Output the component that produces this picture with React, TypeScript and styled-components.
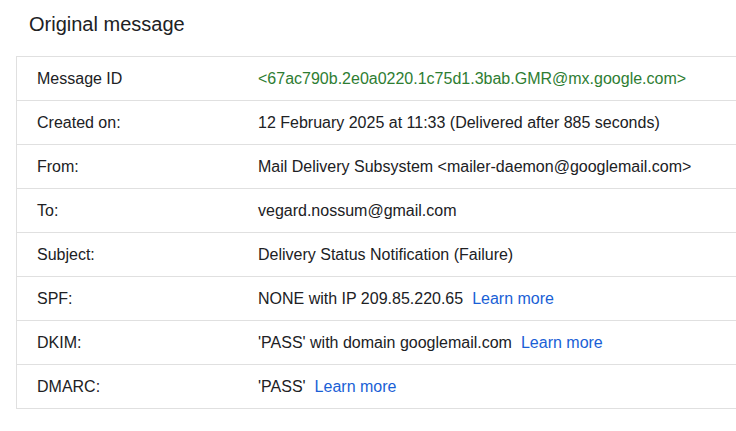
import * as React from 'react';
import styled, { createGlobalStyle } from 'styled-components';

interface HeaderRow {
    label: string;
    value: string;
    tone?: 'id';
    learnMore?: boolean;
}

const rows: HeaderRow[] = [
    { label: 'Message ID', value: '<67ac790b.2e0a0220.1c75d1.3bab.GMR@mx.google.com>', tone: 'id' },
    { label: 'Created on:', value: '12 February 2025 at 11:33 (Delivered after 885 seconds)' },
    { label: 'From:', value: 'Mail Delivery Subsystem <mailer-daemon@googlemail.com>' },
    { label: 'To:', value: 'vegard.nossum@gmail.com' },
    { label: 'Subject:', value: 'Delivery Status Notification (Failure)' },
    { label: 'SPF:', value: 'NONE with IP 209.85.220.65', learnMore: true },
    { label: 'DKIM:', value: "'PASS' with domain googlemail.com", learnMore: true },
    { label: 'DMARC:', value: "'PASS'", learnMore: true },
];

const OriginalMessage = () => {
    return (
        <DivPage>
            <DivTitle>Original message</DivTitle>
            <DivTable>
                {rows.map((row) => (
                    <DivRow key={row.label}>
                        <DivLabel>{row.label}</DivLabel>
                        <DivValue $tone={row.tone}>
                            {row.value}
                            {row.learnMore && <ALearnMore href="#">Learn more</ALearnMore>}
                        </DivValue>
                    </DivRow>
                ))}
            </DivTable>
        </DivPage>
    );
};

const GlobalStyle = createGlobalStyle`
    html, body {
        margin: 0;
        padding: 0;
        background: #ffffff;
        overflow: hidden;
    }
    body {
        font-family: 'Liberation Sans', Arial, sans-serif;
        color: #202124;
    }
`;

const DivPage = styled.div`
    width: 736px;
    height: 431px;
    overflow: hidden;
    padding-top: 12px;
    box-sizing: border-box;
`;

const DivTitle = styled.div`
    font-size: 20px;
    line-height: 24px;
    margin: 0 0 20px 29px;
    color: #202124;
`;

const DivTable = styled.div`
    margin-left: 16px;
    width: 760px;
    border: 1px solid #e0e0e0;
`;

const DivRow = styled.div`
    display: grid;
    grid-template-columns: 241px 1fr;
    align-items: center;
    height: 43px;
    font-size: 16px;
    & + & {
        border-top: 1px solid #e0e0e0;
    }
`;

const DivLabel = styled.div`
    padding-left: 20px;
    color: #202124;
`;

const DivValue = styled.div<{ $tone?: 'id' }>`
    white-space: nowrap;
    color: ${(p) => (p.$tone === 'id' ? '#2e7d32' : '#202124')};
`;

const ALearnMore = styled.a`
    margin-left: 9px;
    color: #1a5fd6;
    text-decoration: none;
`;

const App = () => (
    <>
        <GlobalStyle />
        <OriginalMessage />
    </>
);

export default App;
